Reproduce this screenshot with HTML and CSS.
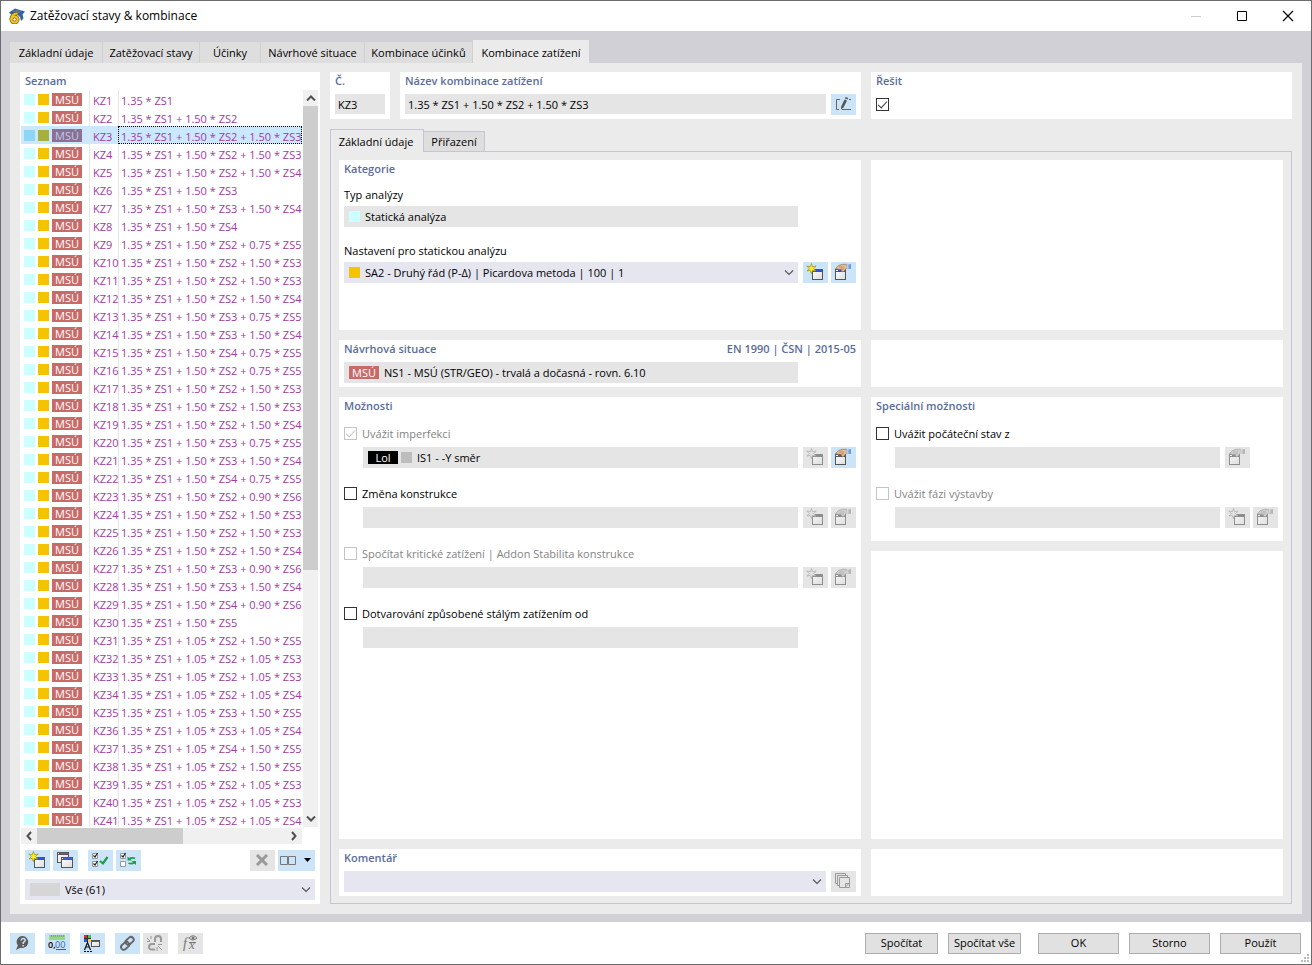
FILE: index.html
```html
<!DOCTYPE html>
<html lang="cs">
<head>
  <meta charset="UTF-8">
  <meta name="viewport" content="width=device-width, initial-scale=1.0">
  <title>Zatěžovací stavy &amp; kombinace</title>
  <link rel="stylesheet" href="styles.css">
</head>
<body>
  <!-- shared icons -->
  <svg class="sprite" aria-hidden="true">
    <defs>
      <linearGradient id="paper" x1="0" y1="0" x2="1" y2="1">
        <stop offset="0" stop-color="#fff"/>
        <stop offset="1" stop-color="#dcdcdc"/>
      </linearGradient>
    </defs>
    <symbol id="i-new" viewBox="0 0 25 21">
      <rect x="9.500" y="7.500" width="10" height="10" fill="url(#paper)" stroke="#555"/>
      <path d="M9 7h11v3H9z" fill="#555"/>
      <path d="M12 8h7v1h-7z" fill="#2f4fe8"/>
      <path d="M10 8h1v1h-1z" fill="#fff"/>
      <path d="M8.500 1.500l1 3.200 3.700-.7-2.600 2.500 2.400 2.500-3.400-.6-1.200 3.300-1.200-3.300-3.200.6 2.300-2.500-2.500-2.500 3.500.7z" fill="#ffee00" stroke="#8f8d35" stroke-width=".7"/>
    </symbol>
    <symbol id="i-edit" viewBox="0 0 25 21">
      <rect x="4.500" y="7.500" width="10" height="10" fill="url(#paper)" stroke="#555"/>
      <path d="M4 7h11v3H4z" fill="#555"/>
      <path d="M5 8h2v1H5z" fill="#fff"/>
      <path d="M7 8h2v1H7z" fill="#2f4fe8"/>
      <path d="M4.500 6.500l3-3 4-1.200h4l.8 3-2 2-1.300 2-2 .5-1-2.500-2.500 0z" fill="#e3bd98" stroke="#98704f" stroke-width=".7"/>
      <path d="M8 5h5M10 7h3" stroke="#a67b58" stroke-width=".7"/>
      <path d="M15.500 3l4.500-1v5l-4-.5z" fill="#6f9bdc"/>
      <path d="M15.500 2.800l2-.4v3.800l-1.700.2z" fill="#b7cdee"/>
    </symbol>
    <symbol id="i-down" viewBox="0 0 10 6">
      <path d="M1 .5l4 4 4-4" fill="none" stroke="#555" stroke-width="1.100"/>
    </symbol>
  </svg>

  <div class="window">
    <header class="titlebar">
      <svg class="app-icon" viewBox="0 0 16 16" aria-hidden="true">
        <path d="M0 4.500l6-4 10 3-2.500 3 1 4-2.500 2.500-1-4-4-3.500-5 1z" fill="#34639f"/>
        <path d="M3 3.500l5-2 5 2-4 2z" fill="#5d7891"/>
        <ellipse cx="5.500" cy="11.500" rx="3.200" ry="3" fill="none" stroke="#6f5a12" stroke-width="3.600"/>
        <path d="M8.500 5.500Q2.800 5.500 2.300 11.500" fill="none" stroke="#6f5a12" stroke-width="3.600"/>
        <ellipse cx="5.500" cy="11.500" rx="3.200" ry="3" fill="none" stroke="#f4c522" stroke-width="2.200"/>
        <path d="M8.500 5.500Q2.800 5.500 2.300 11.500" fill="none" stroke="#f4c522" stroke-width="2.200"/>
      </svg>
      <h1>Zatěžovací stavy &amp; kombinace</h1>
      <button class="win-btn" aria-label="Minimalizovat" disabled><svg viewBox="0 0 12 12"><path d="M1 6.500h10" stroke="#ccc"/></svg></button>
      <button class="win-btn" aria-label="Maximalizovat"><svg viewBox="0 0 12 12"><path d="M1.500 1.500h9v9h-9z" fill="none" stroke="#000"/></svg></button>
      <button class="win-btn" aria-label="Zavřít"><svg viewBox="0 0 12 12"><path d="M1 1l10 10M11 1L1 11" stroke="#000" stroke-width="1.200"/></svg></button>
    </header>

    <div class="body">
      <nav class="tabs" role="tablist">
        <button role="tab">Základní údaje</button>
        <button role="tab">Zatěžovací stavy</button>
        <button role="tab">Účinky</button>
        <button role="tab">Návrhové situace</button>
        <button role="tab">Kombinace účinků</button>
        <button role="tab" class="active" aria-selected="true">Kombinace zatížení</button>
      </nav>

      <main class="page">
        <section class="card list-card">
          <h2>Seznam</h2>
          <div class="list">
            <div class="list-view">
              <table>
                <colgroup><col class="c-type"><col class="c-no"><col></colgroup>
                <tbody id="rows"></tbody>
              </table>
            </div>
            <div class="vscroll">
              <button aria-label="Nahoru"><svg viewBox="0 0 10 6"><path d="M1 5.500l4-4 4 4" fill="none" stroke="#505050" stroke-width="2"/></svg></button>
              <div class="thumb"></div>
              <button class="end" aria-label="Dolů"><svg viewBox="0 0 10 6"><path d="M1 .5l4 4 4-4" fill="none" stroke="#505050" stroke-width="2"/></svg></button>
            </div>
            <div class="hscroll">
              <button aria-label="Vlevo"><svg viewBox="0 0 6 10"><path d="M5 1L1.500 5 5 9" fill="none" stroke="#505050" stroke-width="2"/></svg></button>
              <div class="thumb"></div>
              <button class="end" aria-label="Vpravo"><svg viewBox="0 0 6 10"><path d="M1 1L4.500 5 1 9" fill="none" stroke="#505050" stroke-width="2"/></svg></button>
            </div>
          </div>
          <div class="toolbar list-tools">
            <button class="tool" aria-label="Nová"><svg><use href="#i-new"/></svg></button>
            <button class="tool" aria-label="Kopírovat">
              <svg viewBox="0 0 25 21">
                <rect x="4.500" y="2.500" width="11" height="10" fill="url(#paper)" stroke="#555"/>
                <path d="M4 2h12v3H4z" fill="#555"/><path d="M7 3h8v1H7z" fill="#4c66d8"/><path d="M5 3h1v1H5z" fill="#fff"/>
                <rect x="8.500" y="7.500" width="11" height="10" fill="url(#paper)" stroke="#555"/>
                <path d="M8 7h12v3H8z" fill="#555"/><path d="M11 8h8v1h-8z" fill="#4c66d8"/><path d="M9 8h1v1H9z" fill="#fff"/>
              </svg>
            </button>
            <button class="tool group" aria-label="Vybrat vše">
              <svg viewBox="0 0 25 21">
                <path d="M4.500 3.500h5v5h-5zM4.500 11.500h5v5h-5z" fill="#fff" stroke="#999"/>
                <path d="M5.500 5.500l1.500 1.500 2.500-4M5.500 13.500l1.500 1.500 2.500-4" fill="none" stroke="#222" stroke-width="1.200"/>
                <path d="M12 11l3 2.500 4.500-6.500" fill="none" stroke="#1c9c4c" stroke-width="2.200"/>
              </svg>
            </button>
            <button class="tool" aria-label="Obrátit výběr">
              <svg viewBox="0 0 25 21">
                <path d="M4.500 3.500h5v5h-5zM4.500 11.500h5v5h-5z" fill="#fff" stroke="#999"/>
                <path d="M5.500 5.500l1.500 1.500 2.500-4" fill="none" stroke="#222" stroke-width="1.200"/>
                <path d="M13 9q3-2 6-.5M18.500 12.500q-3 2-6 .5" fill="none" stroke="#1c9c4c" stroke-width="1.800"/>
                <path d="M11.500 6.500v4h4.500zM20 15v-4h-4.500z" fill="#1c9c4c"/>
              </svg>
            </button>
            <button class="tool push" aria-label="Smazat" disabled><svg viewBox="0 0 25 21" class="plain"><path d="M7 5l10 10M17 5L7 15" stroke="#999" stroke-width="3"/></svg></button>
            <button class="tool wide" aria-label="Zobrazení">
              <svg viewBox="0 0 37 21"><path d="M2.500 6.500h7v8h-7zM10.500 6.500h7v8h-7z" fill="none" stroke="#777"/><path d="M26 8h7l-3.500 4z"/></svg>
            </button>
          </div>
          <div class="combo filter">
            <span class="swatch-wide"></span>
            <select aria-label="Filtr"><option>Vše (61)</option></select>
            <svg class="arrow"><use href="#i-down"/></svg>
          </div>
        </section>

        <div class="detail">
          <div class="top-row">
            <section class="card">
              <h2><label for="no">Č.</label></h2>
              <input class="field low" id="no" value="KZ3" readonly>
            </section>
            <section class="card">
              <h2><label for="name">Název kombinace zatížení</label></h2>
              <div class="line">
                <input class="field low" id="name" value="1.35 * ZS1 + 1.50 * ZS2 + 1.50 * ZS3" readonly>
                <button class="tool" aria-label="Upravit název">
                  <svg viewBox="0 0 25 21">
                    <path d="M9 5.500H5.500v10H8M11 15.500h9M18 5.500h2" fill="none" stroke="#666"/>
                    <path d="M13.500 5.500l2.500 1-3.500 7-2.500 2 .2-3z" fill="#555"/><path d="M14.500 3l2.700 1-.7 1.500-2.600-1z" fill="#555"/>
                  </svg>
                </button>
              </div>
            </section>
            <section class="card">
              <h2><label for="solve">Řešit</label></h2>
              <input type="checkbox" id="solve" class="solve" checked>
            </section>
          </div>

          <div class="subtabs" role="tablist">
            <button role="tab" class="active" aria-selected="true">Základní údaje</button>
            <button role="tab">Přiřazení</button>
          </div>

          <div class="pane">
            <section class="card category">
              <h2>Kategorie</h2>
              <label class="caption" for="type">Typ analýzy</label>
              <div class="line indent-end">
                <div class="field-box"><span class="swatch cyan"></span><input id="type" value="Statická analýza" readonly></div>
              </div>
              <label class="caption" for="setting">Nastavení pro statickou analýzu</label>
              <div class="line">
                <div class="combo">
                  <span class="swatch gold"></span>
                  <select id="setting"><option>SA2 - Druhý řád (P-Δ) | Picardova metoda | 100 | 1</option></select>
                  <svg class="arrow"><use href="#i-down"/></svg>
                </div>
                <button class="tool" aria-label="Nové nastavení"><svg><use href="#i-new"/></svg></button>
                <button class="tool" aria-label="Upravit nastavení"><svg><use href="#i-edit"/></svg></button>
              </div>
            </section>
            <section class="card"></section>

            <section class="card">
              <h2><label for="situation">Návrhová situace</label><span>EN 1990 | ČSN | 2015-05</span></h2>
              <div class="line indent-end">
                <div class="field-box"><span class="badge">MSÚ</span><input id="situation" value="NS1 - MSÚ (STR/GEO) - trvalá a dočasná - rovn. 6.10" readonly></div>
              </div>
            </section>
            <section class="card"></section>

            <section class="card options">
              <h2>Možnosti</h2>
              <label class="check off"><input type="checkbox" checked disabled>Uvážit imperfekci</label>
              <div class="line sub">
                <div class="field-box"><span class="badge black">Lol</span><span class="swatch gray"></span><input aria-label="Imperfekce" value="IS1 - -Y směr" readonly></div>
                <button class="tool" aria-label="Nová imperfekce" disabled><svg><use href="#i-new"/></svg></button>
                <button class="tool" aria-label="Upravit imperfekci"><svg><use href="#i-edit"/></svg></button>
              </div>
              <label class="check"><input type="checkbox">Změna konstrukce</label>
              <div class="line sub">
                <input class="field" aria-label="Změna konstrukce" disabled>
                <button class="tool" aria-label="Nová změna" disabled><svg><use href="#i-new"/></svg></button>
                <button class="tool" aria-label="Upravit změnu" disabled><svg><use href="#i-edit"/></svg></button>
              </div>
              <label class="check off"><input type="checkbox" disabled>Spočítat kritické zatížení | Addon Stabilita konstrukce</label>
              <div class="line sub">
                <input class="field" aria-label="Stabilita" disabled>
                <button class="tool" aria-label="Nová stabilita" disabled><svg><use href="#i-new"/></svg></button>
                <button class="tool" aria-label="Upravit stabilitu" disabled><svg><use href="#i-edit"/></svg></button>
              </div>
              <label class="check"><input type="checkbox">Dotvarování způsobené stálým zatížením od</label>
              <div class="line sub indent-end">
                <input class="field" aria-label="Dotvarování" disabled>
              </div>
            </section>
            <div class="stack">
              <section class="card options special">
                <h2>Speciální možnosti</h2>
                <label class="check"><input type="checkbox">Uvážit počáteční stav z</label>
                <div class="line sub one-tool">
                  <input class="field" aria-label="Počáteční stav" disabled>
                  <button class="tool" aria-label="Upravit počáteční stav" disabled><svg><use href="#i-edit"/></svg></button>
                </div>
                <label class="check off"><input type="checkbox" disabled>Uvážit fázi výstavby</label>
                <div class="line sub">
                  <input class="field" aria-label="Fáze výstavby" disabled>
                  <button class="tool" aria-label="Nová fáze" disabled><svg><use href="#i-new"/></svg></button>
                  <button class="tool" aria-label="Upravit fázi" disabled><svg><use href="#i-edit"/></svg></button>
                </div>
              </section>
              <section class="card"></section>
            </div>

            <section class="card">
              <h2><label for="comment">Komentář</label></h2>
              <div class="line">
                <div class="combo">
                  <select id="comment"><option></option></select>
                  <svg class="arrow"><use href="#i-down"/></svg>
                </div>
                <button class="tool" aria-label="Seznam komentářů" disabled>
                  <svg viewBox="0 0 25 21" class="plain">
                    <path d="M6.500 12.500h-2v-10h10v2M8.500 14.500h-2v-10h10v2M8.500 6.500h10v10h-10z" fill="none" stroke="#999"/>
                    <path d="M14.500 16v-3.500H18" fill="none" stroke="#999"/><path d="M15 15.500l3-3" stroke="#999"/>
                  </svg>
                </button>
              </div>
            </section>
            <section class="card"></section>
          </div>
        </div>
      </main>
    </div>

    <footer class="footer">
      <div class="toolbar foot-tools">
        <button class="tool" aria-label="Nápověda">
          <svg viewBox="0 0 25 21"><path d="M13 3a6 6 0 1 1-2.500 11.700L6 17l1.800-4.500A6 6 0 0 1 13 3z" fill="#5c5c5c"/><path d="M11 7.500q.3-2 2.200-2t2 1.800q0 1.200-2 2.200v1.500M13.100 12v1.500" fill="none" stroke="#cce4f7" stroke-width="1.500"/></svg>
        </button>
        <button class="tool" aria-label="Jednotky">
          <svg viewBox="0 0 25 21"><path d="M4 2h16v5H4z" fill="#94d882"/><path d="M6.500 2v2M8.500 2v2M10.500 2v2M12.500 2v2M14.500 2v2M16.500 2v2M18.500 2v2" stroke="#5f9c55" stroke-width=".7"/><text x="3" y="15" font-size="9" font-weight="600">0,</text><text x="10" y="15" font-size="9" fill="#2a5fc4">00</text><path d="M11 16.500h10" stroke="#2a5fc4"/></svg>
        </button>
        <button class="tool" aria-label="Zobrazení">
          <svg viewBox="0 0 25 21">
            <path d="M4 2h7v7H4z" fill="#333"/><path d="M4 2h3v3H4z" fill="#ed2121"/><path d="M8 2h3v3H8z" fill="#35d13a"/><path d="M4 6h3v3H4z" fill="#2d52e8"/><path d="M8 6h3v3H8z" fill="#f5dc1c"/>
            <path d="M4.500 17L7.500 9.500l3 7.500M5.500 14h4" fill="none" stroke="#111" stroke-width="1.200"/><path d="M4 18.500h8" stroke="#111" stroke-dasharray="2 1"/>
            <rect x="11.500" y="7.500" width="8" height="6" fill="url(#paper)" stroke="#555"/><path d="M12 8h7v1h-7z" fill="#3d59cf"/>
          </svg>
        </button>
        <button class="tool" aria-label="Propojit">
          <svg viewBox="0 0 25 21"><g fill="none" stroke="#666" stroke-width="1.900"><rect x="-5" y="-2.700" width="9" height="5.400" rx="2.700" transform="translate(15 7.500) rotate(-42)"/><rect x="-5" y="-2.700" width="9" height="5.400" rx="2.700" transform="translate(10.500 12.500) rotate(-42)"/></g></svg>
        </button>
        <button class="tool" aria-label="Rozpojit" disabled>
          <svg viewBox="0 0 25 21" class="plain"><path d="M12 9V6q0-3 3-3t3 3v3M12 11h-3q-3 0-3 2.800T9 16.500h3" fill="none" stroke="#999" stroke-width="2"/><path d="M8 3v3M4 5l3 3M4 8.500h3M15 13l4 4M15 11.500h4M14 14v4" stroke="#999"/></svg>
        </button>
        <button class="tool" aria-label="Vzorec" disabled>
          <svg viewBox="0 0 25 21" class="plain"><text class="formula" x="5" y="15" font-size="14" fill="#777">f</text><text class="formula" x="11" y="16" font-size="13" fill="#777">x</text><path d="M11 9.500h7" stroke="#777"/><path d="M11 5q4-4.500 8 0-4 4-8 0z" fill="none" stroke="#777"/><circle cx="15" cy="5" r="1.500" fill="#777"/></svg>
        </button>
      </div>
      <div class="actions">
        <button>Spočítat</button>
        <button>Spočítat vše</button>
        <button class="main">OK</button>
        <button class="main">Storno</button>
        <button class="main">Použít</button>
      </div>
      <svg class="grip" viewBox="0 0 8 8" aria-hidden="true"><path d="M6 0h2v2H6zM3 3h2v2H3zM6 3h2v2H6zM0 6h2v2H0zM3 6h2v2H3zM6 6h2v2H6z" fill="#bbb"/></svg>
    </footer>
  </div>
  <script src="script.js"></script>
</body>
</html>
```
FILE: styles.css
```css
* {
  box-sizing: border-box;
  margin: 0;
  padding: 0;
}

body {
  font-family: "Open Sans", "Noto Sans", sans-serif;
  font-size: 11px;
  line-height: 16px;
  color: #000;
}

button,
input,
select {
  font: inherit;
  color: inherit;
  border: none;
  border-radius: 0;
  background: none;
  appearance: none;
  outline: none;
}

.sprite {
  position: absolute;
  width: 0;
  height: 0;
}

.window {
  display: flex;
  flex-direction: column;
  height: 100vh;
  min-height: 760px;
  min-width: 1100px;
  border: 1px solid #6c6c6e;
  background: #fff;
}

/* title bar */
.titlebar {
  display: flex;
  align-items: center;
  height: 30px;
  padding-left: 8px;
}

.app-icon {
  width: 16px;
  height: 16px;
}

.titlebar h1 {
  flex: 1;
  margin-left: 5px;
  font-size: 12px;
  font-weight: normal;
}

.win-btn {
  width: 46px;
  height: 30px;
  display: flex;
  align-items: center;
  justify-content: center;
}

.win-btn svg {
  width: 12px;
  height: 12px;
}

/* main area */
.body {
  flex: 1;
  min-height: 0;
  display: flex;
  flex-direction: column;
  padding: 9px 9px 8px;
  background: #d1d0d6;
}

.tabs {
  display: grid;
  grid-template-columns: 93px 97px 61px 104px 108px 116px;
  align-items: end;
}

.tabs button {
  height: 21px;
  white-space: nowrap;
  background: #dedede;
  border-right: 1px solid #d1d0d6;
}

.tabs .active {
  height: 23px;
  padding-top: 2px;
  background: #ebebeb;
  border: none;
}

.page {
  flex: 1;
  min-height: 0;
  display: flex;
  gap: 10px;
  padding: 9px 10px 10px;
  background: #ebebeb;
}

.card {
  padding: 1px 5px 4px;
  background: #fff;
}

.card h2 {
  display: flex;
  justify-content: space-between;
  font-size: 11px;
  line-height: 16px;
  font-weight: 600;
  color: #5a6d9a;
}

/* list of combinations */
.list-card {
  width: 300px;
  display: flex;
  flex-direction: column;
}

.list {
  flex: 1;
  min-height: 0;
  display: grid;
  grid-template: minmax(0, 1fr) 16px / minmax(0, 1fr) 15px;
  gap: 1px;
  margin: 1px -3px 0 -4px;
}

.list-view {
  overflow: hidden;
}

.list table {
  width: 100%;
  table-layout: fixed;
  border-collapse: separate;
  border-spacing: 0;
  color: #a03ca0;
}

.c-type {
  width: 68px;
}

.c-no {
  width: 29px;
}

.list td {
  height: 18px;
  line-height: 14px;
  white-space: nowrap;
}

.list td + td {
  padding: 3px 0 0 3px;
  border-left: 1px solid #e5e5e5;
}

.list td:last-child {
  padding-left: 2px;
}

.type {
  display: flex;
  align-items: center;
  gap: 3px;
  padding-left: 3px;
  height: 17px;
}

.swatch {
  flex: none;
  width: 11px;
  height: 11px;
}

.cyan {
  background: #ccffff;
}

.gold {
  background: #f5c400;
}

.gray {
  background: #bdbdbd;
}

.badge {
  flex: none;
  width: 30px;
  height: 13px;
  line-height: 13px;
  text-align: center;
  color: #fff;
  background: #c86b68;
}

.black {
  background: #000;
}

.selected {
  background: #cce8ff;
}

.selected .cyan {
  background: #8fd5f5;
}

.selected .gold {
  background: #a9af3d;
}

.selected .badge {
  background: #8c6f92;
  color: #b3cfea;
}

.selected td:last-child {
  outline: 1px dotted #000;
  outline-offset: -1px;
}

.vscroll,
.hscroll {
  display: flex;
  background: #f0f0f0;
}

.vscroll {
  flex-direction: column;
}

.list button {
  flex: none;
  display: flex;
  align-items: center;
  justify-content: center;
  width: 16px;
  height: 16px;
}

.vscroll svg {
  width: 10px;
  height: 6px;
}

.hscroll svg {
  width: 6px;
  height: 10px;
}

.thumb {
  background: #cdcdcd;
}

.vscroll .thumb {
  height: 63%;
}

.hscroll .thumb {
  width: 52%;
}

.vscroll .end {
  margin-top: auto;
}

.hscroll .end {
  margin-left: auto;
}

/* icon buttons */
.toolbar {
  display: flex;
  gap: 3px;
}

.list-tools {
  margin: 6px 0 8px;
}

.tool {
  flex: none;
  width: 25px;
  height: 21px;
  background: #cce4f7;
}

.tool svg {
  display: block;
  width: 100%;
  height: 100%;
}

.tool:disabled {
  background: #e5e5e5;
}

.tool:disabled svg:not(.plain) {
  filter: grayscale(1);
  opacity: 0.6;
}

.tool.group {
  margin-left: 7px;
}

.tool.push {
  margin-left: auto;
}

.tool.wide {
  width: 37px;
}

/* fields */
.field {
  flex: 1;
  width: 100%;
  min-width: 0;
  height: 21px;
  padding: 0 3px;
  background: #e5e5e5;
}

.low {
  height: 20px;
}

.field-box,
.combo {
  flex: 1;
  min-width: 0;
  height: 21px;
  display: flex;
  align-items: center;
  gap: 3px;
  padding-left: 5px;
  background: #e5e5e5;
}

.field-box input,
.combo select {
  flex: 1;
  min-width: 0;
  height: 21px;
  padding-left: 2px;
}

.combo {
  background: #e6e6f1;
}

.combo .arrow {
  flex: none;
  width: 10px;
  height: 6px;
  margin-right: 4px;
}

.filter {
  flex: none;
}

.swatch-wide {
  width: 30px;
  height: 13px;
  background: #d6d6d6;
}

.line {
  display: flex;
  gap: 3px;
}

.line > :first-child {
  margin-right: 2px;
}

.indent-end {
  padding-right: 56px;
}

.caption {
  display: block;
}

input[type="checkbox"] {
  flex: none;
  position: relative;
  width: 13px;
  height: 13px;
  border: 1px solid #333;
  background: #fff;
}

input[type="checkbox"]:checked::after {
  content: "";
  position: absolute;
  left: 3px;
  top: 0;
  width: 4px;
  height: 8px;
  border: solid #333;
  border-width: 0 1px 1px 0;
  transform: rotate(42deg);
}

input[type="checkbox"]:disabled,
input[type="checkbox"]:disabled::after {
  border-color: #c4c4c4;
}

/* right side */
.detail {
  flex: 1;
  min-width: 0;
  display: flex;
  flex-direction: column;
}

.top-row {
  display: grid;
  grid-template-columns: 60px 461px 1fr;
  column-gap: 10px;
}

.top-row .card {
  height: 47px;
}

.top-row h2 {
  margin-bottom: 5px;
}

.top-row .solve {
  display: block;
  margin-top: 9px;
}

.subtabs {
  display: flex;
  align-items: flex-end;
  margin: 10px 0 -1px;
}

.subtabs button {
  position: relative;
  height: 21px;
  width: 61px;
  border: 1px solid #c5c5d3;
  border-left: none;
  background: #dedede;
}

.subtabs .active {
  width: 94px;
  height: 23px;
  padding: 2px 2px 0 0;
  border-left: 1px solid #c5c5d3;
  border-bottom: none;
  background: #ebebeb;
}

.pane {
  flex: 1;
  min-height: 0;
  display: grid;
  grid-template-columns: 522px 1fr;
  grid-template-rows: 170px 47px 1fr 47px;
  gap: 10px;
  padding: 8px 8px 7px;
  border: 1px solid #c5c5d3;
}

.pane h2 {
  margin-bottom: 5px;
}

.category .caption {
  margin: 10px 0 3px;
}

.category .line + .caption {
  margin-top: 16px;
}

.options h2 {
  margin-bottom: 12px;
}

.check {
  display: flex;
  align-items: center;
  gap: 5px;
  height: 16px;
}

.check input {
  margin-bottom: 1px;
}

.off {
  color: #838383;
}

.sub {
  margin: 5px 0 18px 19px;
}

.one-tool {
  padding-right: 28px;
}

.stack {
  display: grid;
  grid-template-rows: 144px 1fr;
  gap: 10px;
}

/* footer */
.footer {
  position: relative;
  display: flex;
  align-items: center;
  justify-content: space-between;
  height: 42px;
  padding: 0 10px 0 9px;
}

.foot-tools {
  gap: 10px;
}

.foot-tools .tool:nth-child(5) {
  margin-left: -7px;
}

.formula {
  font-family: "Liberation Serif", serif;
  font-style: italic;
}

.actions {
  display: flex;
  gap: 10px;
}

.actions button {
  width: 73px;
  height: 21px;
  border: 1px solid #adadad;
  background: #e1e1e1;
  white-space: nowrap;
}

.actions .main {
  width: 81px;
}

.actions button:nth-child(3) {
  margin-left: 7px;
}

.grip {
  position: absolute;
  right: 2px;
  bottom: 2px;
  width: 8px;
  height: 8px;
}
```
FILE: script.js
```js
// every combination starts with 1.35 * ZS1
const combinations = [
  '', '1.50 ZS2', '1.50 ZS2,1.50 ZS3', '1.50 ZS2,1.50 ZS3', '1.50 ZS2,1.50 ZS4',
  '1.50 ZS3', '1.50 ZS3,1.50 ZS4', '1.50 ZS4', '1.50 ZS2,0.75 ZS5', '1.50 ZS2,1.50 ZS3',
  '1.50 ZS2,1.50 ZS3', '1.50 ZS2,1.50 ZS4', '1.50 ZS3,0.75 ZS5', '1.50 ZS3,1.50 ZS4', '1.50 ZS4,0.75 ZS5',
  '1.50 ZS2,0.75 ZS5', '1.50 ZS2,1.50 ZS3', '1.50 ZS2,1.50 ZS3', '1.50 ZS2,1.50 ZS4', '1.50 ZS3,0.75 ZS5',
  '1.50 ZS3,1.50 ZS4', '1.50 ZS4,0.75 ZS5', '1.50 ZS2,0.90 ZS6', '1.50 ZS2,1.50 ZS3', '1.50 ZS2,1.50 ZS3',
  '1.50 ZS2,1.50 ZS4', '1.50 ZS3,0.90 ZS6', '1.50 ZS3,1.50 ZS4', '1.50 ZS4,0.90 ZS6', '1.50 ZS5',
  '1.05 ZS2,1.50 ZS5', '1.05 ZS2,1.05 ZS3', '1.05 ZS2,1.05 ZS3', '1.05 ZS2,1.05 ZS4', '1.05 ZS3,1.50 ZS5',
  '1.05 ZS3,1.05 ZS4', '1.05 ZS4,1.50 ZS5', '1.05 ZS2,1.50 ZS5', '1.05 ZS2,1.05 ZS3', '1.05 ZS2,1.05 ZS3',
  '1.05 ZS2,1.05 ZS4'
];
const selected = 3;

document.getElementById('rows').innerHTML = combinations.map((parts, i) => {
  const terms = ['1.35 ZS1'].concat(parts ? parts.split(',') : []);
  const formula = terms.map(t => t.replace(' ', ' * ')).join(' + ');
  return `<tr${i + 1 === selected ? ' class="selected"' : ''}>
    <td><div class="type"><span class="swatch cyan"></span><span class="swatch gold"></span><span class="badge">MSÚ</span></div></td>
    <td>KZ${i + 1}</td>
    <td>${formula}</td>
  </tr>`;
}).join('');
```
